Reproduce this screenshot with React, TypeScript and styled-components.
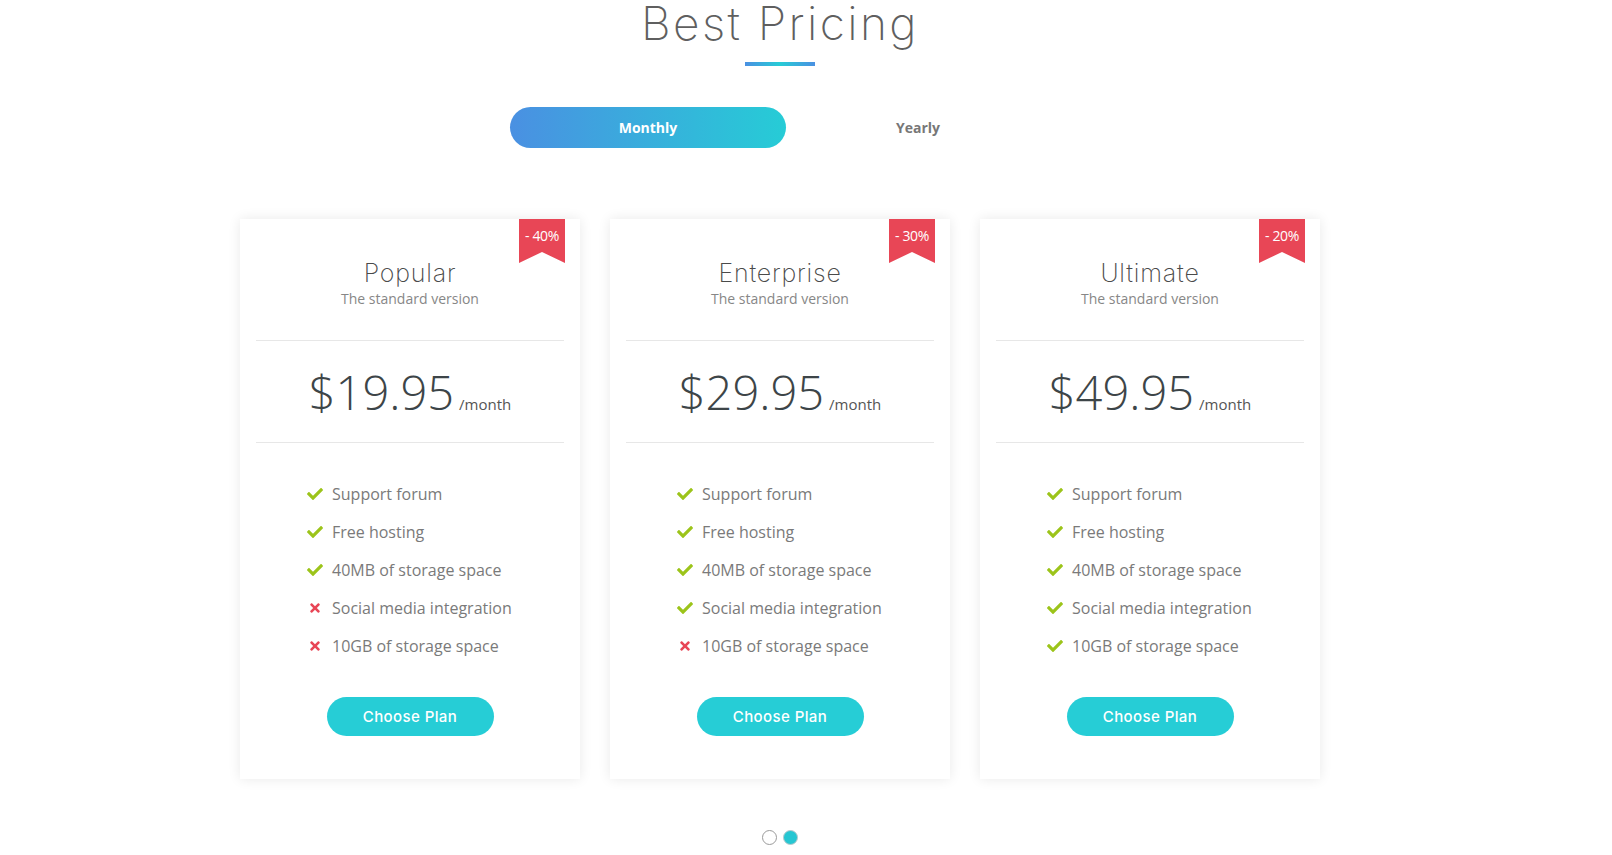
import React from "react";
import styled, { createGlobalStyle } from "styled-components";
import { FaCheck, FaTimes } from "react-icons/fa";

const GlobalStyle = createGlobalStyle`
  html, body { margin: 0; padding: 0; background: #fff; }
  body { font-family: "Open Sans", "Liberation Sans", sans-serif; }
  * { box-sizing: border-box; }
`;

const Page = styled.main`
  width: 1560px;
  display: flex;
  flex-direction: column;
  align-items: center;
`;

const Title = styled.h2`
  margin: 0;
  font-family: Inter, "Liberation Sans", sans-serif;
  font-weight: 200;
  font-size: 46px;
  line-height: 46px;
  color: #5f5f5f;
  letter-spacing: 2.4px;
`;

const Underline = styled.div`
  margin-top: 16px;
  width: 70px;
  height: 4px;
  background: linear-gradient(90deg, #4a90e2 0%, #26ccd6 50%, #4a90e2 100%);
`;

const Toggle = styled.div`
  margin-top: 41px;
  width: 540px;
  display: grid;
  grid-template-columns: 276px 264px;
`;

const ToggleButton = styled.button<{ $active?: boolean }>`
  height: 41px;
  border: none;
  border-radius: 21px;
  font-family: "Open Sans", sans-serif;
  font-weight: 700;
  font-size: 14px;
  cursor: pointer;
  color: ${(p) => (p.$active ? "#fff" : "#777")};
  background: ${(p) =>
    p.$active ? "linear-gradient(90deg, #4a90e2 0%, #26ccd6 100%)" : "transparent"};
`;

const Cards = styled.div`
  margin-top: 71px;
  display: flex;
  gap: 30px;
`;

const Card = styled.div`
  position: relative;
  width: 340px;
  height: 560px;
  padding: 0 16px;
  background: #fff;
  box-shadow: 0 0 12px rgba(0, 0, 0, 0.09);
  display: flex;
  flex-direction: column;
`;

const Ribbon = styled.div`
  position: absolute;
  top: 0;
  right: 15px;
  width: 46px;
  height: 44px;
  background: #e84656;
  clip-path: polygon(0 0, 100% 0, 100% 100%, 50% 75%, 0 100%);
  color: #fff;
  font-family: "Open Sans", sans-serif;
  font-weight: 500;
  font-size: 14px;
  line-height: 14px;
  letter-spacing: -0.3px;
  text-align: center;
  padding-top: 10px;
  white-space: nowrap;
`;

const Header = styled.div`
  padding: 39px 0 31px;
  text-align: center;
  border-bottom: 1px solid #e7e7e7;
`;

const PlanName = styled.h3`
  margin: 0;
  font-family: Inter, "Liberation Sans", sans-serif;
  font-weight: 200;
  font-size: 25px;
  line-height: 30px;
  color: #4a4a4a;
  letter-spacing: 0.8px;
`;

const PlanSub = styled.div`
  font-size: 14px;
  line-height: 20px;
  color: #878787;
  padding-top: 1px;
`;

const PriceRow = styled.div`
  padding: 28px 0 27px;
  display: flex;
  justify-content: center;
  align-items: baseline;
  gap: 5px;
  border-bottom: 1px solid #e7e7e7;
`;

const Amount = styled.span`
  font-weight: 300;
  font-size: 47px;
  line-height: 46px;
  color: #3d4548;
`;

const Per = styled.span`
  font-size: 15px;
  color: #555;
`;

const Features = styled.ul`
  list-style: none;
  margin: 0;
  padding: 32px 0 0 51px;
`;

const Feature = styled.li`
  display: flex;
  align-items: center;
  gap: 9px;
  height: 38px;
  font-size: 16px;
  color: #7a7a7a;
`;

const IconBox = styled.span<{ $ok: boolean }>`
  width: 16px;
  display: flex;
  justify-content: center;
  color: ${(p) => (p.$ok ? "#9cc41a" : "#e84656")};
  font-size: ${(p) => (p.$ok ? "16px" : "14px")};
`;

const ChooseButton = styled.button`
  align-self: center;
  margin-top: 32px;
  width: 167px;
  height: 39px;
  border: none;
  border-radius: 20px;
  background: #26cdd6;
  color: #fff;
  font-family: Inter, "Liberation Sans", sans-serif;
  font-weight: 500;
  font-size: 15px;
  letter-spacing: 0.4px;
  cursor: pointer;
`;

const Dots = styled.div`
  margin-top: 51px;
  display: flex;
  gap: 6px;
`;

const Dot = styled.span<{ $active?: boolean }>`
  width: 15px;
  height: 15px;
  border-radius: 50%;
  border: 1px solid ${(p) => (p.$active ? "#b8c9cc" : "#9a9a9a")};
  background: ${(p) => (p.$active ? "#26c6d2" : "#fff")};
`;

const FEATURES = [
  "Support forum",
  "Free hosting",
  "40MB of storage space",
  "Social media integration",
  "10GB of storage space",
];

const plans = [
  { name: "Popular", price: "$19.95", off: "- 40%", ok: 3 },
  { name: "Enterprise", price: "$29.95", off: "- 30%", ok: 4 },
  { name: "Ultimate", price: "$49.95", off: "- 20%", ok: 5 },
];

export default function App() {
  return (
    <>
      <GlobalStyle />
      <Page>
        <Title>Best Pricing</Title>
        <Underline />
        <Toggle>
          <ToggleButton $active>Monthly</ToggleButton>
          <ToggleButton>Yearly</ToggleButton>
        </Toggle>
        <Cards>
          {plans.map((p) => (
            <Card key={p.name}>
              <Ribbon>{p.off}</Ribbon>
              <Header>
                <PlanName>{p.name}</PlanName>
                <PlanSub>The standard version</PlanSub>
              </Header>
              <PriceRow>
                <Amount>{p.price}</Amount>
                <Per>/month</Per>
              </PriceRow>
              <Features>
                {FEATURES.map((f, i) => {
                  const ok = i < p.ok;
                  return (
                    <Feature key={f}>
                      <IconBox $ok={ok}>{ok ? <FaCheck /> : <FaTimes />}</IconBox>
                      {f}
                    </Feature>
                  );
                })}
              </Features>
              <ChooseButton>Choose Plan</ChooseButton>
            </Card>
          ))}
        </Cards>
        <Dots>
          <Dot />
          <Dot $active />
        </Dots>
      </Page>
    </>
  );
}
